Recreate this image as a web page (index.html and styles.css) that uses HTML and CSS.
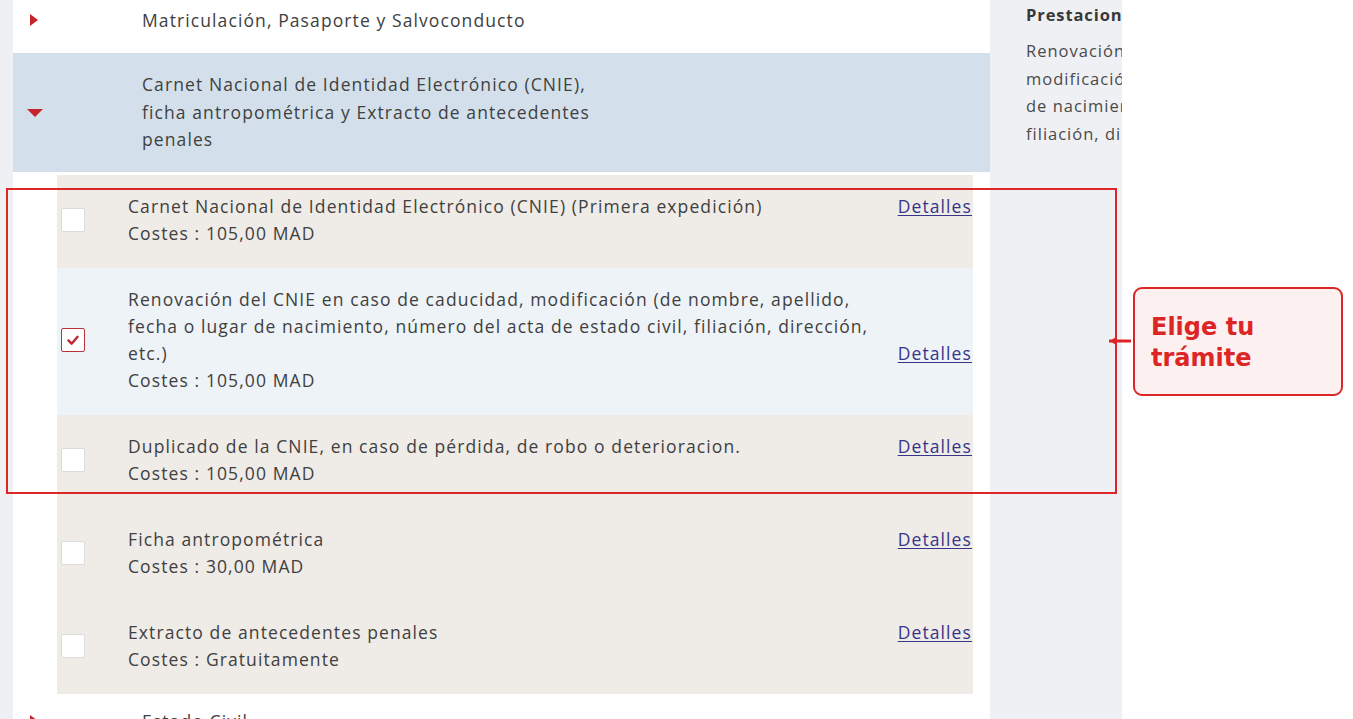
FILE: index.html
```html
<!DOCTYPE html>
<html lang="es">
<head>
<meta charset="utf-8">
<title>Prestaciones</title>
<link rel="stylesheet" href="styles.css">
</head>
<body>
<div class="screen">
  <main class="list">
    <div class="cat">
      <span class="caret caret-right"></span>
      <span class="cat-title">Matriculación, Pasaporte y Salvoconducto</span>
    </div>
    <div class="cat cat-open">
      <span class="caret caret-down"></span>
      <span class="cat-title cat-title-wrap">Carnet Nacional de Identidad Electrónico (CNIE), ficha antropométrica y Extracto de antecedentes penales</span>
    </div>
    <div class="subs">
      <div class="sub sub-warm">
        <span class="box"></span>
        <span class="sub-title">Carnet Nacional de Identidad Electrónico (CNIE) (Primera expedición)</span>
        <a class="details" href="#">Detalles</a>
        <span class="sub-cost">Costes : 105,00 MAD</span>
      </div>
      <div class="sub sub-cool">
        <span class="box box-checked"><svg viewBox="0 0 24 24" width="24" height="24"><path d="M7 12.5 L10.5 16 L17 8.5" fill="none" stroke="#c0262d" stroke-width="2.6" stroke-linecap="round" stroke-linejoin="round"/></svg></span>
        <span class="sub-title">Renovación del CNIE en caso de caducidad, modificación (de nombre, apellido, fecha o lugar de nacimiento, número del acta de estado civil, filiación, dirección, etc.)</span>
        <a class="details" href="#">Detalles</a>
        <span class="sub-cost">Costes : 105,00 MAD</span>
      </div>
      <div class="sub sub-warm">
        <span class="box"></span>
        <span class="sub-title">Duplicado de la CNIE, en caso de pérdida, de robo o deterioracion.</span>
        <a class="details" href="#">Detalles</a>
        <span class="sub-cost">Costes : 105,00 MAD</span>
      </div>
      <div class="sub sub-warm">
        <span class="box"></span>
        <span class="sub-title">Ficha antropométrica</span>
        <a class="details" href="#">Detalles</a>
        <span class="sub-cost">Costes : 30,00 MAD</span>
      </div>
      <div class="sub sub-warm">
        <span class="box"></span>
        <span class="sub-title">Extracto de antecedentes penales</span>
        <a class="details" href="#">Detalles</a>
        <span class="sub-cost">Costes : Gratuitamente</span>
      </div>
    </div>
    <div class="cat cat-last">
      <span class="caret caret-right"></span>
      <span class="cat-title">Estado Civil</span>
    </div>
  </main>
  <aside class="panel">
    <h3 class="panel-title">Prestaciones seleccionadas</h3>
    <p class="panel-text">Renovación del CNIE en caso de caducidad,<br>modificación (de nombre, apellido, fecha o lugar<br>de nacimiento, número del acta de estado civil,<br>filiación, dirección, etc.)</p>
  </aside>
</div>

<div class="annot-frame"></div>
<svg class="annot-arrow" width="26" height="12" viewBox="0 0 26 12">
  <path d="M2 6 L24 6" stroke="#dc2626" stroke-width="3"/>
  <path d="M3 6 L9 2 L9 10 Z" fill="#dc2626"/>
</svg>
<div class="callout">Elige tu trámite</div>
</body>
</html>
```

FILE: styles.css
```css
html, body {
  margin: 0;
  padding: 0;
  background: #ffffff;
}

body {
  width: 1353px;
  height: 719px;
  overflow: hidden;
  position: relative;
  font-family: "Open Sans", "Liberation Sans", sans-serif;
  color: #404040;
}

.screen {
  display: flex;
  width: 1122px;
  height: 719px;
  background: #eef0f4;
  overflow: hidden;
}

.list {
  margin-left: 13px;
  width: 977px;
  flex: none;
  background: #ffffff;
  display: flex;
  flex-direction: column;
}

.cat {
  display: grid;
  grid-template-columns: 129px 1fr;
  align-items: center;
  padding: 8px 0 20px;
  font-size: 17.5px;
  letter-spacing: 1.1px;
  line-height: 24px;
}

.cat-open {
  margin-top: 1px;
  padding: 18px 0 18px;
  line-height: 27.5px;
  background: #d3e0ec;
}

.cat-last {
  margin-top: 8px;
  padding-top: 7px;
}

.cat-title-wrap {
  max-width: 462px;
}

.caret {
  justify-self: start;
  margin-left: 17px;
  width: 0;
  height: 0;
}

.caret-right {
  border-top: 6.5px solid transparent;
  border-bottom: 6.5px solid transparent;
  border-left: 8px solid #c4242b;
}

.caret-down {
  margin-left: 14px;
  margin-top: 2px;
  border-left: 8px solid transparent;
  border-right: 8px solid transparent;
  border-top: 8px solid #c4242b;
}

.subs {
  margin: 3px 17px 0 44px;
  background: #efece8;
  display: flex;
  flex-direction: column;
}

.sub {
  display: grid;
  grid-template-columns: 24px 1fr auto;
  grid-template-rows: auto auto;
  padding: 18px 1px 21px 4px;
  font-size: 17.5px;
  letter-spacing: 1.1px;
  line-height: 27px;
}

.sub-warm {
  background: #efebe7;
}

.sub-cool {
  background: #eef3f7;
}

.box {
  grid-row: 1 / span 2;
  grid-column: 1;
  align-self: center;
  width: 24px;
  height: 24px;
  margin-right: 43px;
  box-sizing: border-box;
  background: #ffffff;
  border: 1px solid #dcdcdc;
  border-radius: 2px;
  display: flex;
  align-items: center;
  justify-content: center;
}

.sub .box {
  margin-right: 0;
}

.sub-title,
.sub-cost {
  grid-column: 2;
  padding-left: 43px;
}

.box svg {
  display: block;
}

.box-checked {
  border: 1.6px solid #b8323a;
}

.sub-title {
  grid-row: 1;
  max-width: 760px;
}

.sub-cost {
  grid-row: 2;
}

.details {
  grid-column: 3;
  grid-row: 1;
  align-self: end;
  color: #36358a;
  text-decoration: underline;
  text-underline-offset: 2px;
}

.panel {
  width: 132px;
  flex: none;
  margin-left: 1px;
  padding-left: 35px;
  box-sizing: border-box;
  overflow: hidden;
}

.panel-title {
  margin: 3px 0 0;
  font-size: 16.5px;
  letter-spacing: 0.9px;
  line-height: 24px;
  font-weight: 700;
  color: #383838;
  white-space: nowrap;
}

.panel-text {
  margin: 10px 0 0;
  font-size: 16.5px;
  letter-spacing: 1px;
  line-height: 27.7px;
  color: #4a4a4a;
  white-space: nowrap;
}

.annot-frame {
  position: absolute;
  left: 6px;
  top: 188px;
  width: 1111px;
  height: 306px;
  box-sizing: border-box;
  border: 2px solid #dc2626;
}

.annot-arrow {
  position: absolute;
  left: 1107px;
  top: 335px;
}

.callout {
  position: absolute;
  left: 1133px;
  top: 287px;
  width: 210px;
  height: 109px;
  box-sizing: border-box;
  border: 2px solid #dc2626;
  border-radius: 9px;
  background: #fdf0f0;
  padding: 23px 20px 0 16px;
  font-family: "DejaVu Sans", sans-serif;
  font-weight: 700;
  font-size: 24px;
  line-height: 31px;
  color: #dc2626;
}
```
